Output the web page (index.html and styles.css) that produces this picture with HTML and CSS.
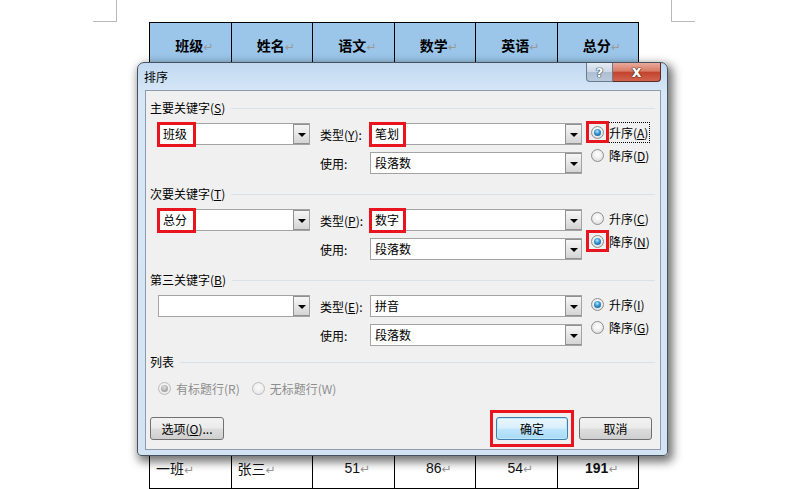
FILE: index.html
```html
<!DOCTYPE html>
<html lang="zh-CN">

<head>
    <meta charset="UTF-8">
    <title>排序</title>
    <link rel="stylesheet" href="styles.css">
</head>

<body>
    <div class="page">
        <!-- 页边角标 -->
        <div class="marks">
            <span class="mark-left"></span>
            <span class="mark-right"></span>
        </div>

        <table class="grades">
            <tr class="head">
                <th>班级<span class="ret">↵</span></th>
                <th>姓名<span class="ret">↵</span></th>
                <th>语文<span class="ret">↵</span></th>
                <th>数学<span class="ret">↵</span></th>
                <th>英语<span class="ret">↵</span></th>
                <th>总分<span class="ret">↵</span></th>
            </tr>
            <tr class="blank"><td></td><td></td><td></td><td></td><td></td><td></td></tr>
            <tr class="blank"><td></td><td></td><td></td><td></td><td></td><td></td></tr>
            <tr class="blank"><td></td><td></td><td></td><td></td><td></td><td></td></tr>
            <tr class="blank"><td></td><td></td><td></td><td></td><td></td><td></td></tr>
            <tr class="blank"><td></td><td></td><td></td><td></td><td></td><td></td></tr>
            <tr class="blank"><td></td><td></td><td></td><td></td><td></td><td></td></tr>
            <tr class="blank"><td></td><td></td><td></td><td></td><td></td><td></td></tr>
            <tr class="blank"><td></td><td></td><td></td><td></td><td></td><td></td></tr>
            <tr class="blank"><td></td><td></td><td></td><td></td><td></td><td></td></tr>
            <tr class="row">
                <td class="txt">一班<span class="ret">↵</span></td>
                <td class="txt">张三<span class="ret">↵</span></td>
                <td>51<span class="ret">↵</span></td>
                <td>86<span class="ret">↵</span></td>
                <td>54<span class="ret">↵</span></td>
                <td class="total">191<span class="ret">↵</span></td>
            </tr>
        </table>

        <!-- 排序对话框 -->
        <div class="dialog">
            <div class="titlebar">
                <span class="title">排序</span>
                <div class="caption">
                    <span class="cap-help">?</span>
                    <span class="cap-close">x</span>
                </div>
            </div>
            <div class="client">
                <div class="section">
                    <div class="legend"><span>主要关键字(<u>S</u>)</span><i></i></div>
                    <div class="keyrow">
                        <div class="combo key"><span class="val">班级</span><b class="drop"></b><span class="hl hl-text"></span></div>
                        <div class="fields">
                            <label>类型(<u>Y</u>):</label>
                            <div class="combo"><span class="val">笔划</span><b class="drop"></b><span class="hl hl-type"></span></div>
                            <label>使用:</label>
                            <div class="combo"><span class="val">段落数</span><b class="drop"></b></div>
                        </div>
                        <div class="order">
                            <div class="radio on"><span class="dot"><span class="hl hl-radio"></span></span><span class="focus">升序(<u>A</u>)</span></div>
                            <div class="radio"><span class="dot"></span><span>降序(<u>D</u>)</span></div>
                        </div>
                    </div>
                </div>

                <div class="section">
                    <div class="legend"><span>次要关键字(<u>T</u>)</span><i></i></div>
                    <div class="keyrow">
                        <div class="combo key"><span class="val">总分</span><b class="drop"></b><span class="hl hl-text"></span></div>
                        <div class="fields">
                            <label>类型(<u>P</u>):</label>
                            <div class="combo"><span class="val">数字</span><b class="drop"></b><span class="hl hl-type"></span></div>
                            <label>使用:</label>
                            <div class="combo"><span class="val">段落数</span><b class="drop"></b></div>
                        </div>
                        <div class="order">
                            <div class="radio"><span class="dot"></span><span>升序(<u>C</u>)</span></div>
                            <div class="radio on"><span class="dot"><span class="hl hl-radio"></span></span><span>降序(<u>N</u>)</span></div>
                        </div>
                    </div>
                </div>

                <div class="section">
                    <div class="legend"><span>第三关键字(<u>B</u>)</span><i></i></div>
                    <div class="keyrow">
                        <div class="combo key"><span class="val"></span><b class="drop"></b></div>
                        <div class="fields">
                            <label>类型(<u>E</u>):</label>
                            <div class="combo"><span class="val">拼音</span><b class="drop"></b></div>
                            <label>使用:</label>
                            <div class="combo"><span class="val">段落数</span><b class="drop"></b></div>
                        </div>
                        <div class="order">
                            <div class="radio on"><span class="dot"></span><span>升序(<u>I</u>)</span></div>
                            <div class="radio"><span class="dot"></span><span>降序(<u>G</u>)</span></div>
                        </div>
                    </div>
                </div>

                <div class="section list">
                    <div class="legend"><span>列表</span><i></i></div>
                    <div class="listrow">
                        <div class="radio on off"><span class="dot"></span><span>有标题行(R)</span></div>
                        <div class="radio off"><span class="dot"></span><span>无标题行(W)</span></div>
                    </div>
                </div>

                <div class="buttons">
                    <button class="btn">选项(<u>O</u>)...</button>
                    <span class="fill"></span>
                    <button class="btn default">确定<span class="hl hl-btn"></span></button>
                    <button class="btn">取消</button>
                </div>
            </div>
        </div>
    </div>
</body>

</html>
```

FILE: styles.css
```css
body {
    margin: 0;
    background: #fff;
    font-family: "Liberation Sans", "Noto Sans CJK SC", sans-serif;
}

.page {
    position: relative;
    width: 788px;
    height: 489px;
    overflow: hidden;
}

/* 页边角标 */
.marks {
    display: flex;
    height: 22px;
}

.mark-left,
.mark-right {
    box-sizing: border-box;
    width: 24px;
    height: 22px;
    border-bottom: 1px solid #b9b9b9;
}

.mark-left {
    margin-left: 93px;
    border-right: 1px solid #b9b9b9;
}

.mark-right {
    margin-left: 554px;
    border-left: 1px solid #b9b9b9;
}

/* 成绩表 */
.grades {
    margin-left: 149px;
    width: 490px;
    border-collapse: collapse;
    table-layout: fixed;
}

.grades th,
.grades td {
    border: 1px solid #000;
    padding: 0;
}

.head th {
    height: 43px;
    background: #9bc6ea;
    font-size: 14px;
    font-weight: 700;
    text-align: center;
    padding-left: 8px;
}

.blank td {
    height: 41px;
}

.row td {
    height: 41px;
    padding-top: 2px;
    font-size: 14px;
    color: #111;
    text-align: center;
    padding-left: 8px;
}

.row td.txt {
    text-align: left;
    padding-left: 6px;
}

.row td.total {
    font-weight: 700;
}

.ret {
    font-family: "DejaVu Sans", sans-serif;
    font-weight: 400;
    font-size: 12px;
    color: #999;
}

/* 对话框 */
.dialog {
    position: absolute;
    left: 137px;
    top: 62px;
    box-sizing: border-box;
    width: 531px;
    height: 394px;
    display: flex;
    flex-direction: column;
    padding: 0 6px 5px 7px;
    border: 1px solid #47525f;
    border-radius: 7px 7px 4px 4px;
    background: linear-gradient(180deg, #c2d9f1 0%, #d7e7f7 8%, #d3e3f3 100%);
    box-shadow: 3px 4px 10px 2px rgba(0, 0, 0, 0.55);
    font-family: "Noto Sans CJK SC", sans-serif;
    font-size: 12px;
    color: #000;
}

.titlebar {
    display: flex;
    height: 27px;
    flex-shrink: 0;
}

.title {
    margin: 6px 0 0 -1px;
    line-height: 16px;
}

.caption {
    display: flex;
    margin-left: auto;
    height: 19px;
}

.cap-help,
.cap-close {
    display: flex;
    align-items: center;
    justify-content: center;
    box-sizing: border-box;
    height: 19px;
    font-family: "DejaVu Sans", sans-serif;
    font-weight: 700;
    color: #fff;
}

.cap-help {
    width: 27px;
    font-size: 13px;
    border: 1px solid #6b7a8c;
    border-top: 0;
    border-radius: 0 0 0 4px;
    background: linear-gradient(180deg, #e4ecf4 0%, #cbd8e6 48%, #aebfd2 52%, #b9cadb 100%);
    text-shadow: 0 0 1px #2c3a4a, 0 0 1px #2c3a4a, 0 0 1px #2c3a4a;
}

.cap-close {
    width: 48px;
    font-size: 15px;
    border: 1px solid #5a2a24;
    border-top: 0;
    border-left: 0;
    border-radius: 0 0 4px 0;
    background: linear-gradient(180deg, #e9aa9c 0%, #d77b66 45%, #c3442e 52%, #d06350 100%);
    text-shadow: 0 0 1px #4a1810, 0 0 1px #4a1810, 0 0 1px #4a1810;
}

.client {
    flex: 1;
    display: flex;
    flex-direction: column;
    padding: 0 5px 0 4px;
    background: #f0f0f0;
    border: 1px solid #8c9cae;
}

.legend {
    display: flex;
    align-items: center;
    gap: 6px;
    height: 16px;
    margin-top: 12px;
    line-height: 16px;
}

.section:first-child .legend {
    margin-top: 9px;
}

.section.list .legend {
    margin-top: 8px;
}

.legend i {
    flex: 1;
    border-top: 1px solid #d8e0e8;
}

.keyrow {
    display: flex;
    margin-top: 7px;
}

.combo {
    position: relative;
    box-sizing: border-box;
    width: 212px;
    height: 22px;
    border: 1px solid #a3a3a3;
    background: #fff;
}

.combo.key {
    width: 152px;
    margin-left: 8px;
}

.val {
    display: block;
    padding-left: 4px;
    line-height: 20px;
}

.drop {
    position: absolute;
    right: 0;
    top: 0;
    box-sizing: border-box;
    width: 16px;
    height: 20px;
    border: 1px solid #909090;
    border-right: 0;
    background: linear-gradient(180deg, #f6f6f6 0%, #e6e6e6 50%, #d4d4d4 100%);
}

.drop::after {
    content: "";
    position: absolute;
    left: 4px;
    top: 8px;
    border-left: 4px solid transparent;
    border-right: 4px solid transparent;
    border-top: 4px solid #000;
}

.fields {
    display: grid;
    grid-template-columns: 50px 212px;
    row-gap: 7px;
    margin-left: 10px;
    align-items: center;
}

.order {
    display: flex;
    flex-direction: column;
    gap: 7px;
    margin-left: 9px;
    padding-top: 1px;
}

.radio {
    display: flex;
    align-items: center;
    gap: 5px;
    height: 16px;
    white-space: nowrap;
}

.dot {
    position: relative;
    box-sizing: border-box;
    width: 13px;
    height: 13px;
    border-radius: 50%;
    border: 1px solid #8e8f8f;
    background: radial-gradient(circle at 50% 40%, #ffffff 0%, #f0f0f0 45%, #cfcfcf 100%);
}

.radio.on .dot::after {
    content: "";
    position: absolute;
    left: 2px;
    top: 2px;
    width: 7px;
    height: 7px;
    border-radius: 50%;
    background: radial-gradient(circle at 45% 35%, #b7ecff 0%, #2f90d0 45%, #0c4f86 100%);
}

.focus {
    outline: 1px dotted #000;
    outline-offset: 1px;
}

.listrow {
    display: flex;
    gap: 12px;
    margin: 10px 0 0 8px;
}

.radio.off {
    color: #8d8d8d;
}

.radio.off .dot {
    border-color: #bcbcbc;
    background: radial-gradient(circle at 50% 40%, #fafafa 0%, #ededed 60%, #dadada 100%);
}

.radio.off.on .dot::after {
    background: radial-gradient(circle at 45% 35%, #e2e2e2 0%, #a8a8a8 60%, #9a9a9a 100%);
}

.buttons {
    display: flex;
    gap: 11px;
    margin-top: auto;
    margin-bottom: 9px;
    padding-right: 3px;
}

.fill {
    flex: 1;
}

.btn {
    position: relative;
    box-sizing: border-box;
    width: 73px;
    height: 23px;
    padding: 0;
    border: 1px solid #707070;
    border-radius: 3px;
    background: linear-gradient(180deg, #f2f2f2 0%, #ebebeb 48%, #dddddd 52%, #cfcfcf 100%);
    font-family: "Noto Sans CJK SC", sans-serif;
    font-size: 12px;
    color: #000;
}

.btn.default {
    width: 72px;
    border-color: #3c7fb1;
    box-shadow: inset 0 0 0 1px #bfe6fb;
    background: linear-gradient(180deg, #eaf6fd 0%, #d9f0fc 48%, #bee6fd 52%, #a7d9f5 100%);
}

.btn:first-child {
    width: 74px;
}

/* 红色标注框 */
.hl {
    position: absolute;
    box-sizing: border-box;
    border: 3px solid #e8141e;
    pointer-events: none;
}

.hl-text {
    left: -2px;
    top: -2px;
    width: 39px;
    height: 25px;
}

.hl-type {
    left: -2px;
    top: -2px;
    width: 37px;
    height: 25px;
}

.hl-radio {
    left: -6px;
    top: -6px;
    width: 23px;
    height: 22px;
}

.hl-btn {
    left: -7px;
    top: -8px;
    width: 84px;
    height: 37px;
}
```
